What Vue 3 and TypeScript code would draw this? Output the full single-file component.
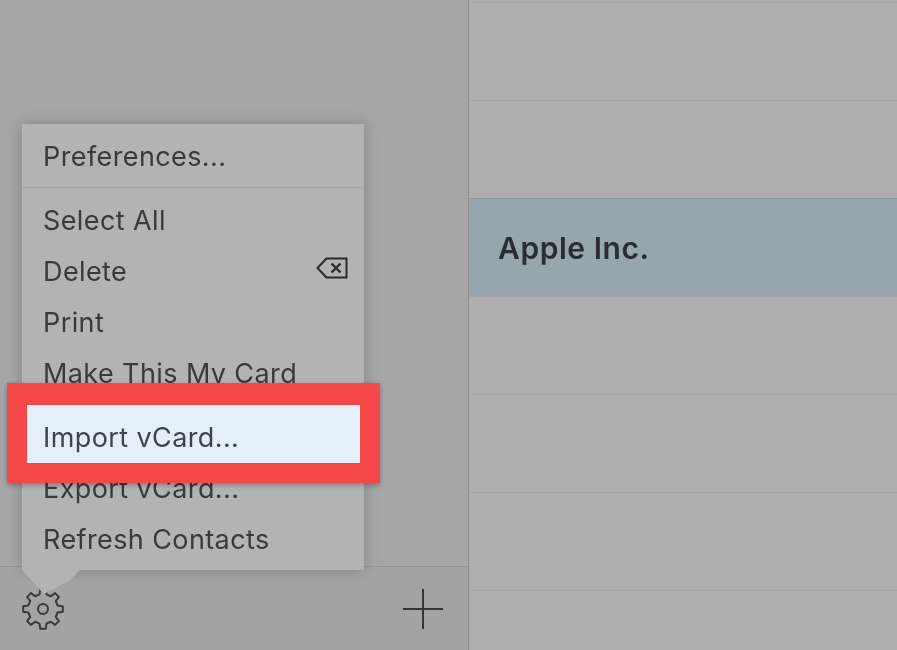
<script setup lang="ts">
const firstGroup = ['Select All', 'Delete', 'Print', 'Make This My Card']
const contacts = ['', '', 'Apple Inc.', '', '', '', '']

function gearPath(cx: number, cy: number, outer: number, inner: number, teeth: number): string {
  const step = (Math.PI * 2) / teeth
  const pts: string[] = []
  for (let i = 0; i < teeth; i++) {
    const a = -Math.PI / 2 + i * step
    const pairs: [number, number][] = [
      [inner, a - step * 0.3],
      [outer, a - step * 0.17],
      [outer, a + step * 0.17],
      [inner, a + step * 0.3],
    ]
    for (const [r, t] of pairs) {
      pts.push(`${(cx + r * Math.cos(t)).toFixed(2)} ${(cy + r * Math.sin(t)).toFixed(2)}`)
    }
  }
  return 'M' + pts.join('L') + 'Z'
}
const gear = gearPath(22, 22, 20, 15, 8)
</script>

<template>
  <div class="screen">
    <aside class="sidebar">
      <div class="spacer"></div>
      <footer class="footer">
        <svg class="gear" width="44" height="44" viewBox="0 0 44 44" fill="none">
          <path :d="gear" stroke="#3a3a3a" stroke-width="2" stroke-linejoin="round" />
          <circle cx="22" cy="22" r="5" stroke="#3a3a3a" stroke-width="2" />
        </svg>
        <svg class="plus" width="40" height="40" viewBox="0 0 40 40" fill="none">
          <path d="M0 20H40M20 0V40" stroke="#353535" stroke-width="2" />
        </svg>
      </footer>
    </aside>

    <main class="list">
      <div
        v-for="(name, i) in contacts"
        :key="i"
        class="row"
        :class="{ selected: name !== '' }"
      >{{ name }}</div>
    </main>

    <div class="menu">
      <div class="item">Preferences...</div>
      <div class="sep"></div>
      <div v-for="label in firstGroup" :key="label" class="item">
        <span>{{ label }}</span>
        <svg v-if="label === 'Delete'" class="del" width="32" height="22" viewBox="0 0 32 22" fill="none">
          <path d="M1.5 11L10.5 1.5H30.5V20.5H10.5Z" stroke="#2a2a2a" stroke-width="2" stroke-linejoin="miter" />
          <path d="M15.5 6.5L24.5 15.5M24.5 6.5L15.5 15.5" stroke="#2a2a2a" stroke-width="2.4" />
        </svg>
      </div>
      <div class="sep hidden-sep"></div>
      <div class="item import">
        <div class="callout"><div class="callout-inner"></div></div>
        <span class="import-label">Import vCard...</span>
      </div>
      <div class="item">Export vCard...</div>
      <div class="item">Refresh Contacts</div>
      <svg class="tail" width="60" height="24" viewBox="0 0 60 24">
        <path d="M0 0H58L47 11L24 23Q21 24 19 21Z" fill="#b3b3b3" />
      </svg>
    </div>
  </div>
</template>

<style>
html, body { margin: 0; padding: 0; }
</style>

<style scoped>
.screen {
  position: relative;
  display: flex;
  width: 897px;
  height: 650px;
  overflow: hidden;
  background: #aeaeae;
  font-family: Inter, "Liberation Sans", sans-serif;
  color: #3a3a3a;
  filter: blur(0.6px);
}
.sidebar {
  width: 469px;
  height: 650px;
  flex: none;
  box-sizing: border-box;
  display: flex;
  flex-direction: column;
  background: #a6a6a6;
  border-right: 1px solid #8f8f8f;
}
.spacer { flex: 1; }
.footer {
  height: 84px;
  box-sizing: border-box;
  border-top: 1px solid #969696;
  display: flex;
  align-items: center;
  justify-content: space-between;
  padding: 0 25px 0 21px;
  background: #a3a3a3;
}
.gear { flex: none; }
.plus { flex: none; }
.list {
  flex: 1;
  min-width: 0;
  padding-top: 2px;
  display: flex;
  flex-direction: column;
}
.row {
  height: 98px;
  flex: none;
  box-sizing: border-box;
  border-top: 1px solid #a5a5a5;
  padding-left: 29px;
  display: flex;
  align-items: center;
  font-size: 30px;
  font-weight: 600;
  letter-spacing: 0.55px;
  color: #2a2e34;
}
.row.selected {
  background: #97a6ac;
  border-top-color: #88999c;
  box-shadow: 0 1px 0 #8d9a9f;
}
.menu {
  position: absolute;
  left: 22px;
  top: 124px;
  width: 342px;
  height: 446px;
  box-sizing: border-box;
  padding-top: 7px;
  background: #b3b3b3;
  box-shadow: 0 0 14px rgba(0, 0, 0, 0.22);
}
.item {
  height: 51px;
  display: flex;
  align-items: center;
  justify-content: space-between;
  padding: 0 16px 0 21px;
  font-size: 27px;
  letter-spacing: 0.4px;
}
.del { margin-top: -8px; }
.sep {
  height: 1px;
  margin: 5px 0 7px;
  background: #a6a6a6;
}
.hidden-sep { margin: 5px 0 7px; }
.import {
  position: relative;
  z-index: 1;
}
.import-label {
  position: relative;
  color: #3f444a;
}
.callout {
  position: absolute;
  left: -15px;
  top: -29px;
  width: 373px;
  height: 100px;
  box-sizing: border-box;
  padding: 22px 20px 20px;
  background: #f44848;
  box-shadow: 0 2px 5px rgba(0, 0, 0, 0.3);
}
.callout-inner {
  height: 100%;
  background: #e4effa;
}
.tail {
  position: absolute;
  left: 0;
  top: 446px;
}
</style>
